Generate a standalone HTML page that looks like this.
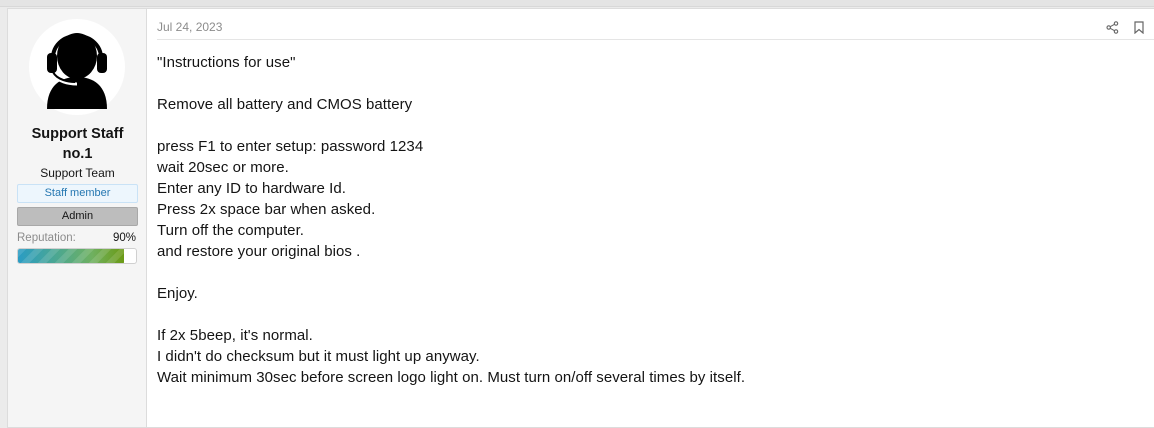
<!DOCTYPE html>
<html><head><meta charset="utf-8"><style>
*{margin:0;padding:0;box-sizing:border-box}
body{width:1154px;height:412px;overflow:hidden;background:#ebebeb;font-family:"Liberation Sans",sans-serif;position:relative}
.top{position:absolute;left:0;top:0;width:1154px;height:7px;background:#e4e4e4;border-bottom:1px solid #d8d8d8}
.box{position:absolute;left:7px;top:8px;width:1160px;height:420px;background:#fff;border:1px solid #dcdcdc}
.side{position:absolute;left:0;top:0;width:139px;height:100%;background:#f5f5f5;border-right:1px solid #dcdcdc}
.av{position:absolute;left:21px;top:10px;width:96px;height:96px;border-radius:50%;background:#fff}
.name{position:absolute;left:0;width:139px;text-align:center;font-weight:bold;font-size:14.5px;color:#141414}
.t{position:absolute;left:0;width:139px;text-align:center;font-size:12px;color:#141414}
.badge{position:absolute;left:9px;width:121px;height:19px;font-size:11px;text-align:center;line-height:17px;border-radius:2px}
.main{position:absolute;left:140px;top:0;right:0}
.date{position:absolute;left:9px;top:11px;font-size:12px;color:#8c8c8c}
.hr{position:absolute;left:9px;top:30px;width:1010px;height:1px;background:#e5e5e5}
.txt{position:absolute;left:9px;top:43px;font-size:15px;line-height:21px;color:#141414;letter-spacing:0.05px;white-space:pre}
</style></head><body>
<div class="top"></div>
<div class="box">
<div class="side">
 <div class="av"><svg width="96" height="96" viewBox="0 0 96 96">
  <path d="M18 90 C18 66 32 58 48 58 C64 58 78 66 78 90 Z" fill="#000"/>
  <ellipse cx="48" cy="37" rx="20" ry="23" fill="#000"/>
  <path d="M24 44 C20 8 76 8 72 44" stroke="#000" stroke-width="4" fill="none"/>
  <rect x="18" y="34" width="10" height="20" rx="4" fill="#000"/>
  <rect x="68" y="34" width="10" height="20" rx="4" fill="#000"/>
  <path d="M24 54 C28 63 40 65 48 65" stroke="#fff" stroke-width="3" fill="none"/>
  <path d="M24 53 C28 61 40 63 46 63" stroke="#000" stroke-width="2" fill="none"/>
 </svg></div>
 <div class="name" style="top:117px">Support Staff</div>
 <div class="name" style="top:137px">no.1</div>
 <div class="t" style="top:157px">Support Team</div>
 <div class="badge" style="top:175px;background:#edf6fd;border:1px solid #c9e2f6;color:#2577b1">Staff member</div>
 <div class="badge" style="top:198px;background:#bdbdbd;border:1px solid #a8a8a8;color:#141414">Admin</div>
 <div style="position:absolute;left:9px;top:223px;font-size:11.5px;color:#8c8c8c">Reputation:</div>
 <div style="position:absolute;right:10px;top:223px;font-size:11.5px;color:#141414">90%</div>
 <div style="position:absolute;left:9px;top:239px;width:120px;height:16px;border:1px solid #d0d0d0;border-radius:3px;background:#fff;overflow:hidden">
  <div style="width:106px;height:100%;background:repeating-linear-gradient(135deg,rgba(255,255,255,.12) 0 6px,rgba(0,0,0,0) 6px 12px),linear-gradient(90deg,#2a9cc4,#4fa88c 40%,#6fb060 70%,#6b9a14)"></div>
 </div>
</div>
<div class="main">
 <div class="date">Jul 24, 2023</div>
 <div class="hr"></div>
 <svg style="position:absolute;left:958px;top:12px" width="13" height="13" viewBox="0 0 13 13" fill="none" stroke="#666" stroke-width="1.1"><circle cx="10" cy="2.5" r="1.7"/><circle cx="2.7" cy="6.5" r="1.7"/><circle cx="10" cy="10.5" r="1.7"/><path d="M4.2 5.7L8.5 3.3M4.2 7.3L8.5 9.7"/></svg>
 <svg style="position:absolute;left:986px;top:12px" width="10" height="13" viewBox="0 0 10 13" fill="none" stroke="#666" stroke-width="1.2"><path d="M1 1H9V12L5 8.5L1 12Z"/></svg>
 <div class="txt">"Instructions for use"

Remove all battery and CMOS battery

press F1 to enter setup: password 1234
wait 20sec or more.
Enter any ID to hardware Id.
Press 2x space bar when asked.
Turn off the computer.
and restore your original bios .

Enjoy.

If 2x 5beep, it's normal.
I didn't do checksum but it must light up anyway.
Wait minimum 30sec before screen logo light on. Must turn on/off several times by itself.</div>
</div>
</div>
</body></html>
